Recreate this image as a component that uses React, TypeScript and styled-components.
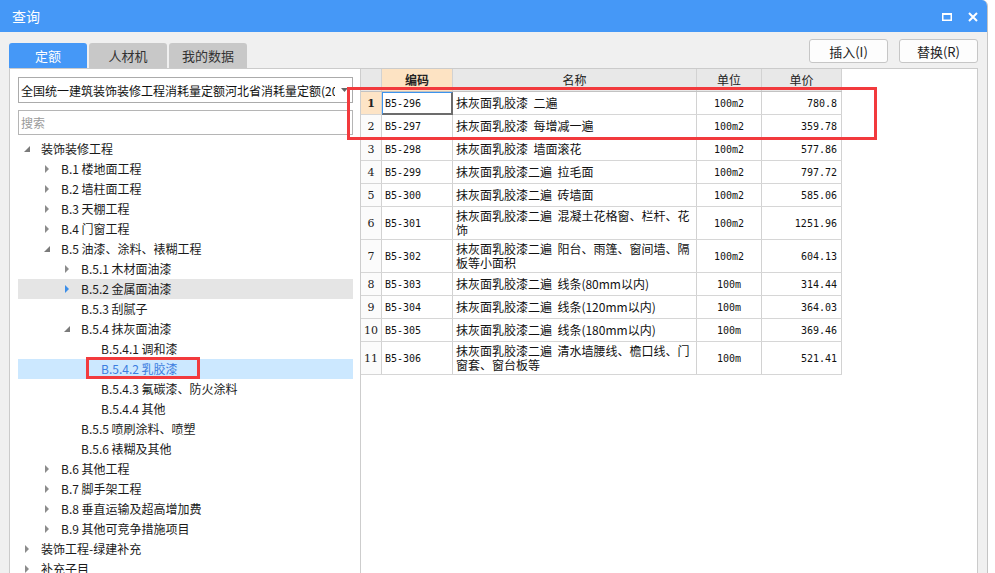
import { createGlobalStyle } from "styled-components";
import styled from "styled-components";

type Node = {
  label: string;
  level: number;
  kind: "open" | "closed" | "leaf";
  hover?: boolean;
  selected?: boolean;
};

const tree: Node[] = [
  { label: "装饰装修工程", level: 0, kind: "open" },
  { label: "B.1 楼地面工程", level: 1, kind: "closed" },
  { label: "B.2 墙柱面工程", level: 1, kind: "closed" },
  { label: "B.3 天棚工程", level: 1, kind: "closed" },
  { label: "B.4 门窗工程", level: 1, kind: "closed" },
  { label: "B.5 油漆、涂料、裱糊工程", level: 1, kind: "open" },
  { label: "B.5.1 木材面油漆", level: 2, kind: "closed" },
  { label: "B.5.2 金属面油漆", level: 2, kind: "closed", hover: true },
  { label: "B.5.3 刮腻子", level: 2, kind: "leaf" },
  { label: "B.5.4 抹灰面油漆", level: 2, kind: "open" },
  { label: "B.5.4.1 调和漆", level: 3, kind: "leaf" },
  { label: "B.5.4.2 乳胶漆", level: 3, kind: "leaf", selected: true },
  { label: "B.5.4.3 氟碳漆、防火涂料", level: 3, kind: "leaf" },
  { label: "B.5.4.4 其他", level: 3, kind: "leaf" },
  { label: "B.5.5 喷刷涂料、喷塑", level: 2, kind: "leaf" },
  { label: "B.5.6 裱糊及其他", level: 2, kind: "leaf" },
  { label: "B.6 其他工程", level: 1, kind: "closed" },
  { label: "B.7 脚手架工程", level: 1, kind: "closed" },
  { label: "B.8 垂直运输及超高增加费", level: 1, kind: "closed" },
  { label: "B.9 其他可竞争措施项目", level: 1, kind: "closed" },
  { label: "装饰工程-绿建补充", level: 0, kind: "closed" },
  { label: "补充子目", level: 0, kind: "closed" },
];

type Item = { code: string; name: string; unit: string; price: string; tall?: boolean };

const items: Item[] = [
  { code: "B5-296", name: "抹灰面乳胶漆  二遍", unit: "100m2", price: "780.8" },
  { code: "B5-297", name: "抹灰面乳胶漆  每增减一遍", unit: "100m2", price: "359.78" },
  { code: "B5-298", name: "抹灰面乳胶漆  墙面滚花", unit: "100m2", price: "577.86" },
  { code: "B5-299", name: "抹灰面乳胶漆二遍  拉毛面", unit: "100m2", price: "797.72" },
  { code: "B5-300", name: "抹灰面乳胶漆二遍  砖墙面", unit: "100m2", price: "585.06" },
  { code: "B5-301", name: "抹灰面乳胶漆二遍  混凝土花格窗、栏杆、花饰", unit: "100m2", price: "1251.96", tall: true },
  { code: "B5-302", name: "抹灰面乳胶漆二遍  阳台、雨篷、窗间墙、隔板等小面积", unit: "100m2", price: "604.13", tall: true },
  { code: "B5-303", name: "抹灰面乳胶漆二遍  线条(80mm以内)", unit: "100m", price: "314.44" },
  { code: "B5-304", name: "抹灰面乳胶漆二遍  线条(120mm以内)", unit: "100m", price: "364.03" },
  { code: "B5-305", name: "抹灰面乳胶漆二遍  线条(180mm以内)", unit: "100m", price: "369.46" },
  { code: "B5-306", name: "抹灰面乳胶漆二遍  清水墙腰线、檐口线、门窗套、窗台板等", unit: "100m", price: "521.41", tall: true },
];

const Caret = ({ kind, hover }: { kind: Node["kind"]; hover?: boolean }) => {
  if (kind === "leaf") return <CaretBox />;
  return (
    <CaretBox>
      {kind === "open" ? (
        <svg width="6" height="6" viewBox="0 0 6 6">
          <polygon points="6,0 6,6 0,6" fill="#7b7b7b" />
        </svg>
      ) : (
        <svg width="4" height="8" viewBox="0 0 4 8">
          <polygon points="0,0 4,4 0,8" fill={hover ? "#3c8ee8" : "#8c8c8c"} />
        </svg>
      )}
    </CaretBox>
  );
};

export default function App() {
  return (
    <>
      <GlobalStyle />
      <Window>
        <TitleBar>
          <span>查询</span>
          <WinButtons>
            <svg width="10" height="8" viewBox="0 0 10 8">
              <rect x="0.75" y="1" width="8.5" height="6.25" fill="none" stroke="#fff" strokeWidth="1.5" />
              <rect x="0" y="0" width="10" height="2" fill="#fff" />
            </svg>
            <svg width="10" height="10" viewBox="0 0 10 10">
              <path d="M1 1 L9 9 M9 1 L1 9" stroke="#fff" strokeWidth="2" />
            </svg>
          </WinButtons>
        </TitleBar>

        <Toolbar>
          <Tabs>
            <Tab $active>定额</Tab>
            <Tab>人材机</Tab>
            <Tab>我的数据</Tab>
          </Tabs>
          <Actions>
            <ActionButton>插入(I)</ActionButton>
            <ActionButton>替换(R)</ActionButton>
          </Actions>
        </Toolbar>

        <Content>
          <LeftPane>
            <Combo>
              <ComboText>全国统一建筑装饰装修工程消耗量定额河北省消耗量定额(2012)</ComboText>
              <svg width="7" height="4" viewBox="0 0 7 4">
                <polygon points="0,0 7,0 3.5,4" fill="#666" />
              </svg>
            </Combo>
            <Search placeholder="搜索" />
            <Tree>
              {tree.map((n) => (
                <TreeRow key={n.label} $level={n.level} $hover={n.hover} $selected={n.selected}>
                  <Caret kind={n.kind} hover={n.hover} />
                  <span>{n.label}</span>
                  {n.selected && <TreeMark />}
                </TreeRow>
              ))}
            </Tree>
          </LeftPane>

          <GridPane>
            <Grid>
              <GridRow $head>
                <HeadCell />
                <HeadCell $active>编码</HeadCell>
                <HeadCell>名称</HeadCell>
                <HeadCell>单位</HeadCell>
                <HeadCell>单价</HeadCell>
              </GridRow>
              {items.map((it, i) => (
                <GridRow key={it.code} $tall={it.tall}>
                  <NumCell $active={i === 0}>{i + 1}</NumCell>
                  <CodeCell $focused={i === 0}>{it.code}</CodeCell>
                  <NameCell>{it.name}</NameCell>
                  <ValueCell $align="center">{it.unit}</ValueCell>
                  <ValueCell $align="flex-end">{it.price}</ValueCell>
                </GridRow>
              ))}
            </Grid>
          </GridPane>

          <GridMark />
        </Content>
      </Window>
    </>
  );
}

const GlobalStyle = createGlobalStyle`
  html, body {
    margin: 0;
    padding: 0;
    background: #ffffff;
    overflow: hidden;
  }
  * {
    box-sizing: border-box;
  }
  body {
    font-family: "Noto Sans CJK SC", "Noto Sans", sans-serif;
    font-size: 12px;
    color: #1a1a1a;
  }
`;

const Window = styled.div`
  width: 988px;
  height: 573px;
  display: flex;
  flex-direction: column;
  background: #f0f0f0;
  border-right: 1px solid #c4c4c4;
  border-top-right-radius: 6px;
  overflow: hidden;
`;

const TitleBar = styled.div`
  height: 32px;
  flex-shrink: 0;
  display: flex;
  align-items: center;
  justify-content: space-between;
  padding: 0 9px 0 12px;
  background: #4598f7;
  color: #fff;
  font-size: 14px;
`;

const WinButtons = styled.div`
  display: flex;
  align-items: center;
  gap: 16px;
  padding-top: 1px;
`;

const Toolbar = styled.div`
  height: 36px;
  flex-shrink: 0;
  display: flex;
  justify-content: space-between;
  padding: 0 9px;
`;

const Tabs = styled.div`
  display: flex;
  align-self: flex-end;
  gap: 2px;
`;

const Tab = styled.div<{ $active?: boolean }>`
  width: 78px;
  height: 25px;
  display: flex;
  align-items: center;
  justify-content: center;
  border-radius: 3px 3px 0 0;
  font-size: 13px;
  background: ${(p) => (p.$active ? "#4598f7" : "#c8c8c8")};
  color: ${(p) => (p.$active ? "#fff" : "#333")};
`;

const Actions = styled.div`
  display: flex;
  gap: 11px;
  margin-top: 7px;
  align-self: flex-start;
`;

const ActionButton = styled.button`
  width: 79px;
  height: 24px;
  border: 1px solid #c6c6c6;
  border-radius: 3px;
  background: #fdfdfd;
  font-family: "Noto Sans CJK SC", "Noto Sans", sans-serif;
  font-size: 13px;
  color: #222;
  padding: 0;
`;

const Content = styled.div`
  flex: 1;
  position: relative;
  display: flex;
  margin: 0 9px;
  background: #fff;
  border: 1px solid #cbcbcb;
  border-bottom: none;
  min-height: 0;
`;

const LeftPane = styled.div`
  width: 351px;
  flex-shrink: 0;
  border-right: 1px solid #cdcdcd;
  padding: 8px 7px 0 8px;
  display: flex;
  flex-direction: column;
  overflow: hidden;
`;

const Combo = styled.div`
  height: 26px;
  flex-shrink: 0;
  display: flex;
  align-items: center;
  gap: 6px;
  padding: 0 4px 0 2px;
  border: 1px solid #ababab;
  font-size: 12px;
  color: #111;
`;

const ComboText = styled.span`
  flex: 1;
  white-space: nowrap;
  overflow: hidden;
`;

const Search = styled.input`
  height: 25px;
  flex-shrink: 0;
  margin-top: 7px;
  padding: 0 2px;
  border: 1px solid #b5b5b5;
  outline: none;
  font-family: "Noto Sans CJK SC", "Noto Sans", sans-serif;
  font-size: 12px;
  &::placeholder {
    color: #9a9a9a;
  }
`;

const Tree = styled.div`
  margin-top: 4px;
  flex-shrink: 0;
  display: flex;
  flex-direction: column;
`;

const TreeRow = styled.div<{ $level: number; $hover?: boolean; $selected?: boolean }>`
  position: relative;
  height: 20px;
  flex-shrink: 0;
  display: flex;
  align-items: center;
  padding-left: ${(p) => p.$level * 20 + 2}px;
  white-space: pre;
  line-height: 20px;
  background: ${(p) => (p.$selected ? "#cce8ff" : p.$hover ? "#e5e5e5" : "transparent")};
  color: ${(p) => (p.$selected ? "#3d7ee0" : "#1a1a1a")};
`;

const CaretBox = styled.span`
  width: 14px;
  margin-right: 7px;
  display: flex;
  align-items: center;
  justify-content: center;
`;

const TreeMark = styled.div`
  position: absolute;
  left: 68px;
  top: -2px;
  width: 114px;
  height: 22px;
  border: 3px solid #f23a3d;
`;

const GridPane = styled.div`
  flex: 1;
  background: #fff;
`;

const Grid = styled.div`
  width: 481px;
  display: flex;
  flex-direction: column;
`;

const GridRow = styled.div<{ $head?: boolean; $tall?: boolean }>`
  display: grid;
  grid-template-columns: 21px 71px 244px 65px 80px;
  height: ${(p) => (p.$tall ? 33 : 23)}px;
  border-bottom: 1px solid ${(p) => (p.$head ? "#c2c2c2" : "#d6d6d6")};
`;

const HeadCell = styled.div<{ $active?: boolean }>`
  display: flex;
  align-items: center;
  justify-content: center;
  padding-bottom: 1px;
  border-right: 1px solid #d2d2d2;
  background: ${(p) => (p.$active ? "#fde3c3" : "#e8e8e8")};
  font-weight: ${(p) => (p.$active ? 700 : 400)};
  color: #222;
`;

const NumCell = styled.div<{ $active?: boolean }>`
  display: flex;
  align-items: center;
  justify-content: center;
  border-right: 1px solid #d2d2d2;
  background: ${(p) => (p.$active ? "#fde4c6" : "#fbfbfb")};
  font-family: "DejaVu Serif", "Liberation Serif", serif;
  font-size: 11px;
  font-weight: ${(p) => (p.$active ? 700 : 400)};
  color: #222;
`;

const CodeCell = styled.div<{ $focused?: boolean }>`
  display: flex;
  align-items: center;
  padding-left: 3px;
  border-right: 1px solid #d2d2d2;
  font-family: "DejaVu Sans Mono", "Liberation Mono", monospace;
  font-size: 10px;
  color: #111;
  ${(p) =>
    p.$focused &&
    `
    border-top: 1px solid #3c94ee;
    border-left: 1px solid #3c94ee;
    border-right: 2px solid #6c6c6c;
    border-bottom: 2px solid #6c6c6c;
    padding-left: 2px;
    margin-bottom: -1px;
  `}
`;

const NameCell = styled.div`
  display: flex;
  align-items: center;
  padding: 0 3px;
  border-right: 1px solid #d2d2d2;
  line-height: 14px;
  white-space: pre-wrap;
  word-break: break-all;
  color: #111;
`;

const ValueCell = styled.div<{ $align: string }>`
  display: flex;
  align-items: center;
  justify-content: ${(p) => p.$align};
  padding: 0 4px;
  border-right: 1px solid #d2d2d2;
  font-family: "DejaVu Sans Mono", "Liberation Mono", monospace;
  font-size: 10px;
  color: #111;
`;

const GridMark = styled.div`
  position: absolute;
  left: 337px;
  top: 18px;
  width: 530px;
  height: 53px;
  border: 3px solid #f23a3d;
  pointer-events: none;
`;
